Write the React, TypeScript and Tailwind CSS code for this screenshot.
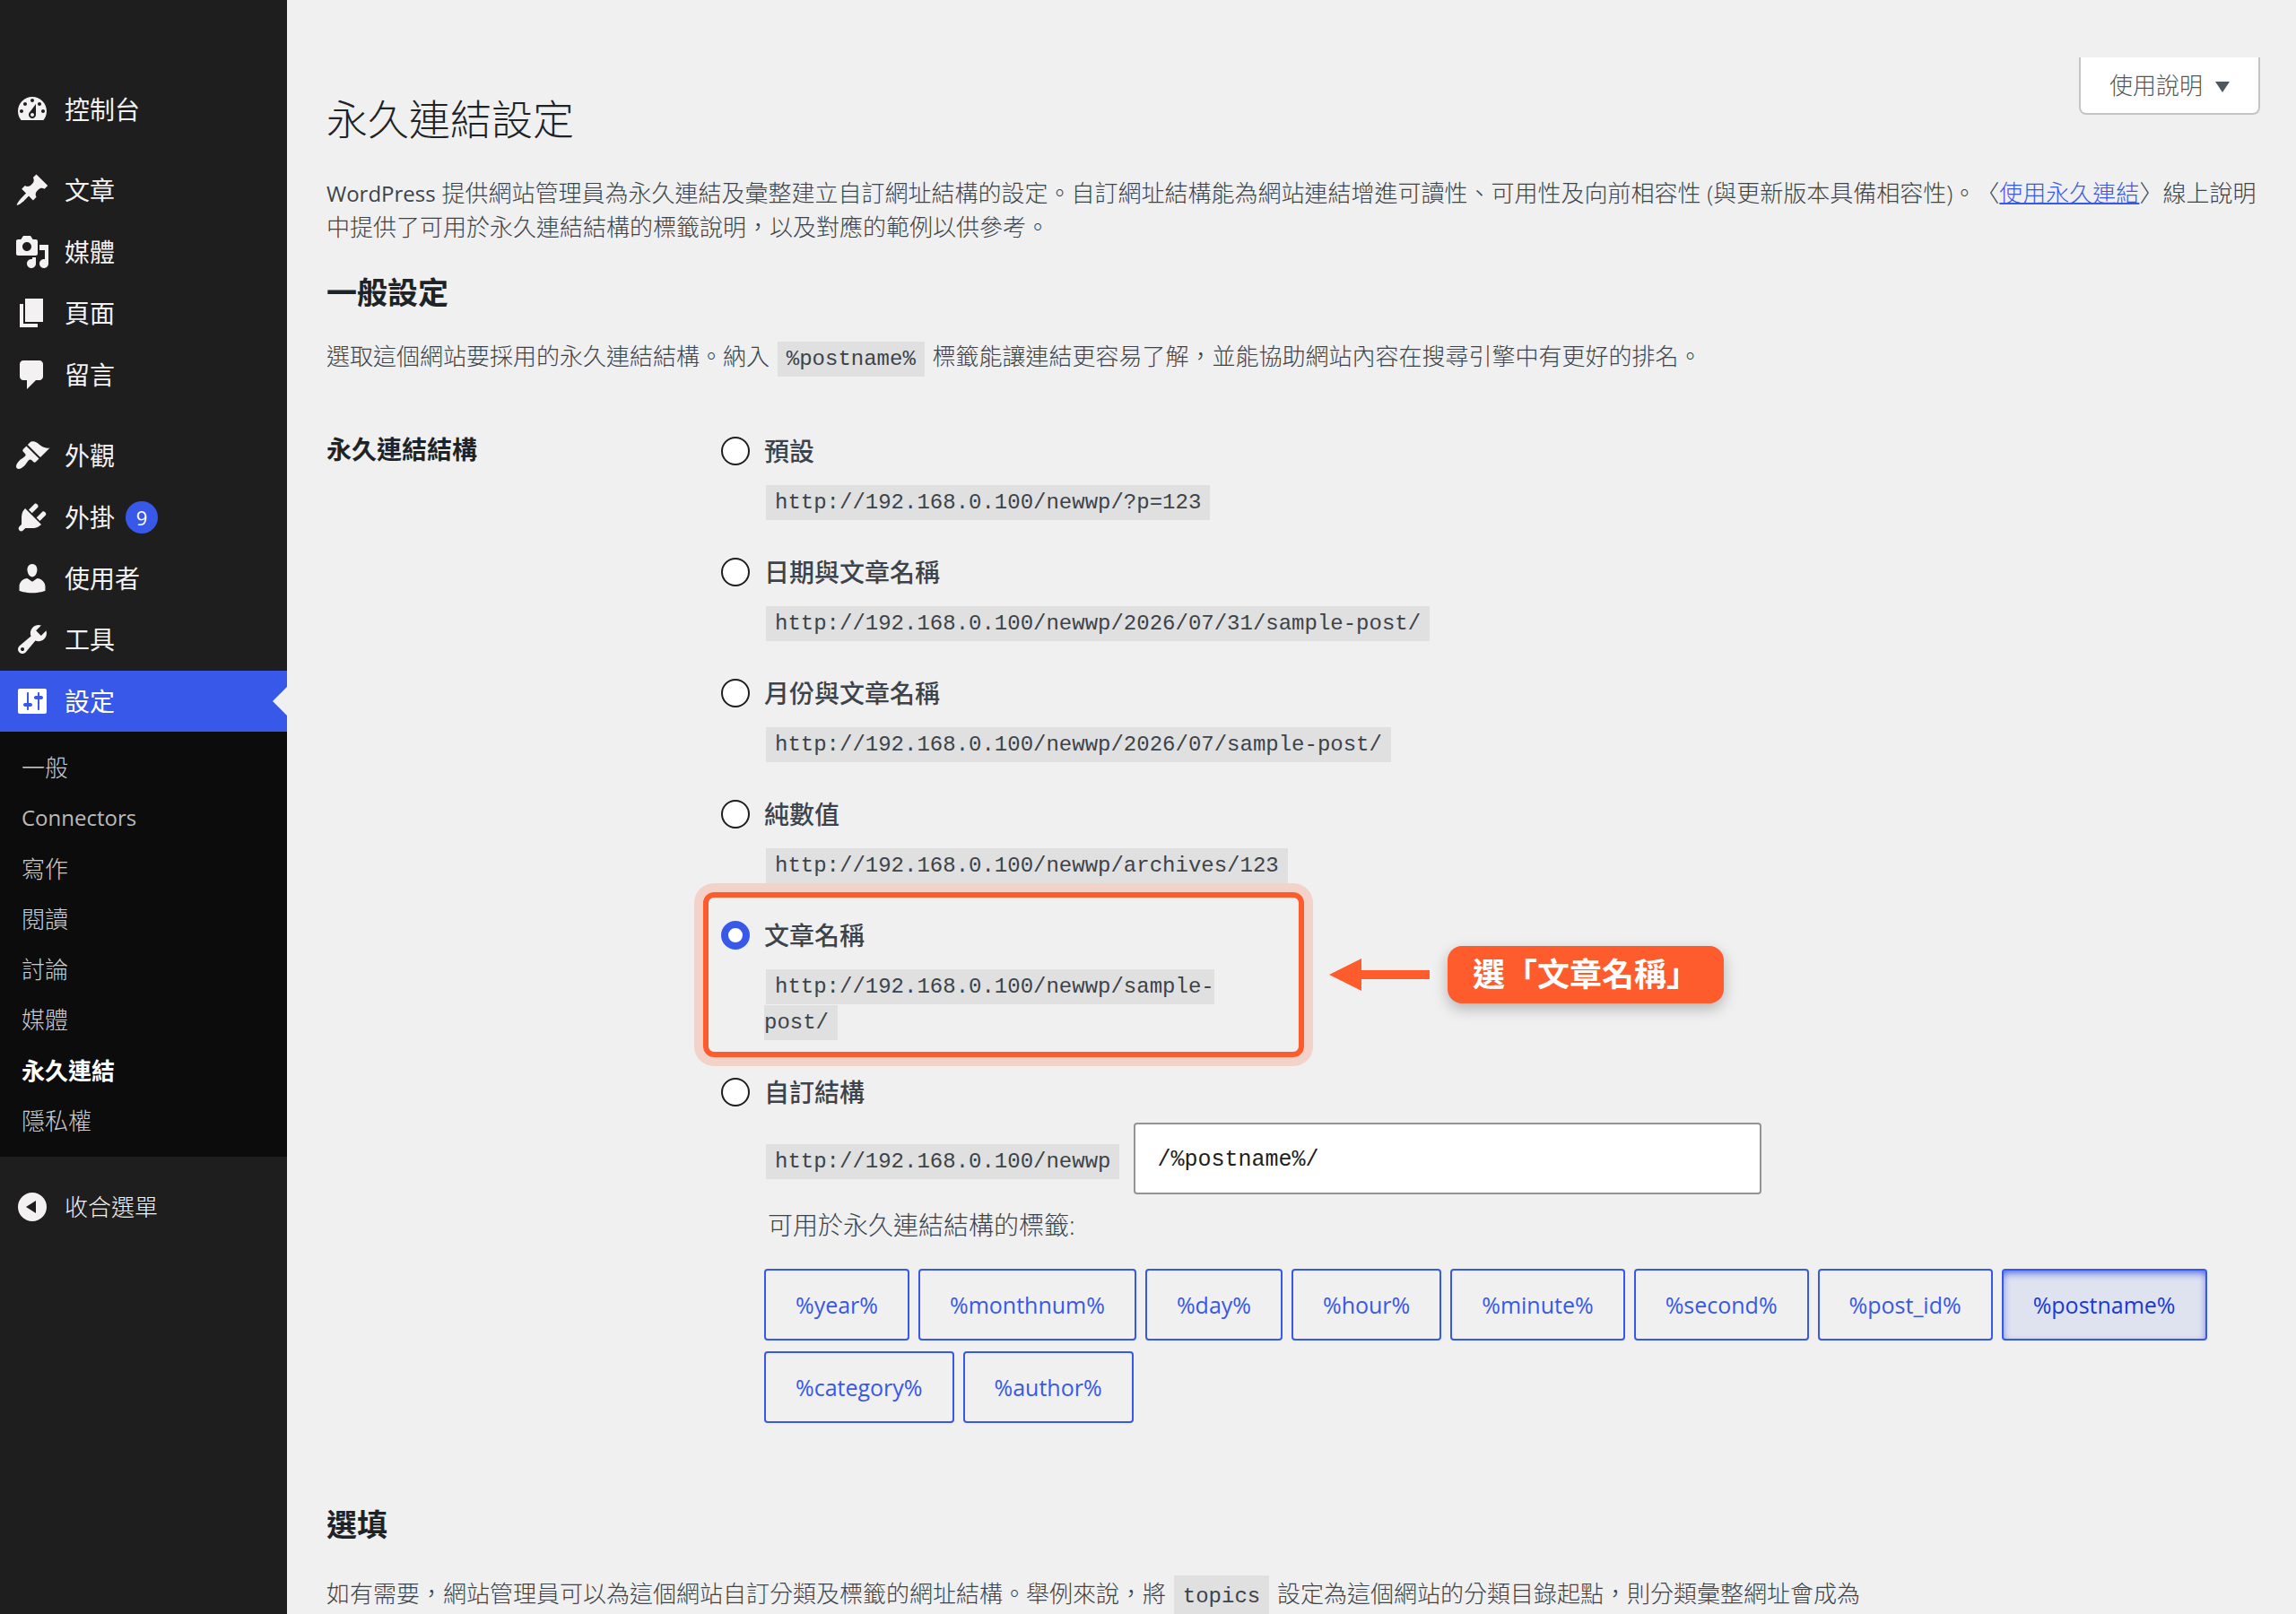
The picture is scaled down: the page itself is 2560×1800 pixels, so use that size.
import { useState } from "react";
import type { ReactNode } from "react";

type IconProps = { d: string };

function Icon({ d }: IconProps) {
  return (
    <svg viewBox="0 0 20 20" className="size-10 shrink-0" fill="currentColor" aria-hidden="true">
      <path fillRule="evenodd" d={d} />
    </svg>
  );
}

const ICONS = {
  dashboard:
    "M3.76 16h12.48c1.1-1.37 1.76-3.11 1.76-5 0-4.42-3.58-8-8-8s-8 3.58-8 8c0 1.89.66 3.63 1.76 5zM10 4c.55 0 1 .45 1 1s-.45 1-1 1-1-.45-1-1 .45-1 1-1zM6 6c.55 0 1 .45 1 1s-.45 1-1 1-1-.45-1-1 .45-1 1-1zm8 0c.55 0 1 .45 1 1s-.45 1-1 1-1-.45-1-1 .45-1 1-1zm-5.37 5.55L12 7v6c0 1.1-.9 2-2 2s-2-.9-2-2c0-.57.24-1.08.63-1.45zM4 10c.55 0 1 .45 1 1s-.45 1-1 1-1-.45-1-1 .45-1 1-1zm12 0c.55 0 1 .45 1 1s-.45 1-1 1-1-.45-1-1 .45-1 1-1zm-5 3c0-.55-.45-1-1-1s-1 .45-1 1 .45 1 1 1 1-.45 1-1z",
  posts:
    "M10.44 3.02l1.82-1.82 6.36 6.35-1.83 1.82c-1.05-.68-2.48-.57-3.41.36l-.75.75c-.92.93-1.04 2.35-.35 3.41l-1.83 1.82-2.41-2.41-2.8 2.79c-.42.42-3.38 2.71-3.8 2.29s1.86-3.39 2.28-3.81l2.79-2.79L4.1 9.36l1.83-1.82c1.05.69 2.48.57 3.4-.36l.75-.75c.93-.92 1.05-2.35.36-3.41z",
  media:
    "M13 11V4c0-.55-.45-1-1-1h-1.67L9 1H5L3.67 3H2c-.55 0-1 .45-1 1v7c0 .55.45 1 1 1h10c.55 0 1-.45 1-1zM7 4.5c1.38 0 2.5 1.12 2.5 2.5S8.38 9.5 7 9.5 4.5 8.38 4.5 7 5.62 4.5 7 4.5zM14 6h5v10.5c0 1.38-1.12 2.5-2.5 2.5S14 17.88 14 16.5s1.12-2.5 2.5-2.5c.17 0 .34.02.5.05V9h-3V6zm-4 8.05V13h2v3.5c0 1.38-1.12 2.5-2.5 2.5S7 17.88 7 16.5 8.12 14 9.5 14c.17 0 .34.02.5.05z",
  pages: "M6 15V2h10v13H6zm-1 1h8v2H3V5h2v11z",
  comments:
    "M5 2h9c1.1 0 2 .9 2 2v7c0 1.1-.9 2-2 2h-2l-5 5v-5H5c-1.1 0-2-.9-2-2V4c0-1.1.9-2 2-2z",
  appearance:
    "M14.48 11.06L7.41 3.99l1.5-1.5c.5-.56 2.3-.47 3.51.32 1.21.8 1.43 1.28 2.91 2.1 1.18.64 2.45 1.26 4.45.85zm-.71.71L6.7 4.7 4.93 6.47c-.39.39-.39 1.02 0 1.41l1.06 1.06c.39.39.39 1.03 0 1.42-.6.6-1.43 1.11-2.21 1.69-.35.26-.7.53-1.01.84C1.43 14.23.4 16.08 1.4 17.07c.99 1 2.84-.03 4.18-1.36.31-.31.58-.66.85-1.02.57-.78 1.08-1.61 1.69-2.21.39-.39 1.02-.39 1.41 0l1.06 1.06c.39.39 1.02.39 1.41 0z",
  plugins:
    "M13.11 4.36L9.87 7.6 8 5.73l3.24-3.24c.35-.34 1.05-.2 1.56.32.52.51.66 1.21.31 1.55zm-8 1.77l.91-1.12 9.01 9.01-1.19.84c-.71.71-2.63 1.16-3.82 1.16H6.14L4.9 17.26c-.59.59-1.54.59-2.12 0-.59-.58-.59-1.53 0-2.12l1.24-1.24v-3.88c0-1.13.4-3.19 1.09-3.89zm7.26 3.97l3.24-3.24c.34-.35 1.04-.21 1.55.31.52.51.66 1.21.31 1.55l-3.24 3.25z",
  users:
    "M10 9.25c-2.27 0-2.73-3.44-2.73-3.44C7 4.02 7.82 2 9.97 2c2.16 0 2.98 2.02 2.71 3.81 0 0-.41 3.44-2.68 3.44zm0 2.57L12.72 10c2.39 0 4.52 2.33 4.52 4.53v2.49s-3.65 1.13-7.24 1.13c-3.65 0-7.24-1.13-7.24-1.13v-2.49c0-2.25 1.94-4.48 4.47-4.48z",
  tools:
    "M16.68 9.77c-1.34 1.34-3.3 1.67-4.95.99l-5.41 6.52c-.99.99-2.59.99-3.58 0s-.99-2.59 0-3.57l6.52-5.42c-.68-1.65-.35-3.61.99-4.95 1.28-1.28 3.12-1.62 4.72-1.06l-2.89 2.89 2.82 2.82 2.86-2.87c.53 1.58.18 3.39-1.08 4.65zM3.81 16.21c.4.39 1.04.39 1.43 0 .4-.4.4-1.04 0-1.43-.39-.4-1.03-.4-1.43 0-.39.39-.39 1.03 0 1.43z",
  settings:
    "M18 16V4c0-.55-.45-1-1-1H3c-.55 0-1 .45-1 1v12c0 .55.45 1 1 1h14c.55 0 1-.45 1-1zM8 11h1c.55 0 1 .45 1 1s-.45 1-1 1H8v1.5c0 .28-.22.5-.5.5s-.5-.22-.5-.5V13H6c-.55 0-1-.45-1-1s.45-1 1-1h1V5.5c0-.28.22-.5.5-.5s.5.22.5.5V11zm5-2h-1c-.55 0-1-.45-1-1s.45-1 1-1h1V5.5c0-.28.22-.5.5-.5s.5.22.5.5V7h1c.55 0 1 .45 1 1s-.45 1-1 1h-1v5.5c0 .28-.22.5-.5.5s-.5-.22-.5-.5V9z",
  collapse: "M10 2a8 8 0 1 0 0 16 8 8 0 0 0 0-16zM12 6.5v7L6.5 10z",
};

type MenuItemProps = { icon: string; label: string; badge?: string; active?: boolean };

function MenuItem({ icon, label, badge, active }: MenuItemProps) {
  return (
    <li className="grid min-h-[68px]">
      <a
        href="#"
        className={
          active
            ? "relative flex items-center bg-[#3858e9] pl-4 text-[28px] leading-10 text-white"
            : "flex items-center pl-4 text-[28px] leading-10 text-[#f3f1f1]"
        }
      >
        <Icon d={icon} />
        <span className="ml-4">{label}</span>
        {badge && (
          <span className="ml-3 flex size-9 items-center justify-center rounded-full bg-[#3858e9] text-[22px] text-white">
            {badge}
          </span>
        )}
        {active && (
          <span className="absolute top-1/2 right-0 -translate-y-1/2 border-y-16 border-r-16 border-y-transparent border-r-[#f0f0f0]" />
        )}
      </a>
    </li>
  );
}

const SUBMENU = ["一般", "Connectors", "寫作", "閱讀", "討論", "媒體", "永久連結", "隱私權"];

function submenuClass(label: string) {
  if (label === "永久連結") return "flex items-center pl-6 text-[26px] font-bold text-white";
  if (label === "Connectors") return "flex items-center pl-6 text-[24px] font-normal text-[#bbbbbb]";
  return "flex items-center pl-6 text-[26px] font-light text-[#cccccc]";
}

function Sidebar() {
  return (
    <nav className="w-80 shrink-0 bg-[#1e1e1e] pt-22" aria-label="主選單">
      <ul>
        <MenuItem icon={ICONS.dashboard} label="控制台" />
      </ul>
      <ul className="mt-[22px] grid h-[274px] auto-rows-fr">
        <MenuItem icon={ICONS.posts} label="文章" />
        <MenuItem icon={ICONS.media} label="媒體" />
        <MenuItem icon={ICONS.pages} label="頁面" />
        <MenuItem icon={ICONS.comments} label="留言" />
      </ul>
      <ul className="mt-[22px] grid h-[342px] auto-rows-fr">
        <MenuItem icon={ICONS.appearance} label="外觀" />
        <MenuItem icon={ICONS.plugins} label="外掛" badge="9" />
        <MenuItem icon={ICONS.users} label="使用者" />
        <MenuItem icon={ICONS.tools} label="工具" />
        <MenuItem icon={ICONS.settings} label="設定" active />
      </ul>
      <ul className="grid h-[474px] auto-rows-fr bg-[#0c0c0c] py-3">
        {SUBMENU.map((label) => (
          <li key={label} className="grid">
            <a href="#" className={submenuClass(label)}>
              {label}
            </a>
          </li>
        ))}
      </ul>
      <button type="button" className="mt-[22px] flex h-[68px] w-full items-center pl-4 text-[26px] font-light text-[#f3f1f1]">
        <Icon d={ICONS.collapse} />
        <span className="ml-4">收合選單</span>
      </button>
    </nav>
  );
}

function Code({ children, tall }: { children: ReactNode; tall?: boolean }) {
  return (
    <code
      className={
        tall
          ? "mx-0.5 bg-[#e0e0e0] px-2.5 py-2.5 font-['Liberation_Mono',monospace] text-[24px] leading-none font-normal"
          : "mx-0.5 bg-[#e0e0e0] px-2.5 py-1.5 font-['Liberation_Mono',monospace] text-[24px] leading-none font-normal"
      }
    >
      {children}
    </code>
  );
}

type OptionProps = {
  id: string;
  label: string;
  selected: string;
  onSelect: (id: string) => void;
  children: ReactNode;
};

function Option({ id, label, selected, onSelect, children }: OptionProps) {
  return (
    <div>
      <div className="flex h-8 items-center gap-4">
        <input
          type="radio"
          name="permalink"
          id={id}
          checked={selected === id}
          onChange={() => onSelect(id)}
          className="size-8 shrink-0 appearance-none rounded-full border-2 border-[#1e1e1e] bg-white checked:border-8 checked:border-[#3858e9]"
        />
        <label htmlFor={id} className="text-[28px] leading-8 font-medium">
          {label}
        </label>
      </div>
      <div className="mt-[18px] pl-12 leading-10">{children}</div>
    </div>
  );
}

const TAGS = ["year", "monthnum", "day", "hour", "minute", "second", "post_id", "postname", "category", "author"];

export default function App() {
  const [selected, setSelected] = useState("name");
  const [structure, setStructure] = useState("/%postname%/");
  const option = { selected, onSelect: setSelected };

  return (
    <div
      lang="zh-Hant"
      className="flex h-screen min-h-[900px] overflow-hidden bg-[#f0f0f0] font-['Open_Sans','Noto_Sans_CJK_TC',sans-serif] text-[26px] leading-[38px] text-[#3c434a] [text-spacing-trim:space-all]"
    >
      <Sidebar />
      <main className="min-w-0 flex-1 pt-16 pr-10 pl-11">
        <header className="flex items-start justify-between">
          <h1 className="mt-10 text-[46px] leading-14 font-light text-[#1d2327]">永久連結設定</h1>
          <button
            type="button"
            className="flex h-16 items-center gap-3.5 rounded-b-lg border-2 border-t-0 border-[#c3c4c7] bg-white px-8 font-light text-[#50575e]"
          >
            使用說明
            <svg viewBox="0 0 16 12" className="mt-1 h-3 w-4" fill="currentColor" aria-hidden="true">
              <path d="M0 0h16L8 12z" />
            </svg>
          </button>
        </header>

        <p className="mt-9 font-light">
          <span className="text-[24px] leading-none font-normal">WordPress</span>{" "}
          提供網站管理員為永久連結及彙整建立自訂網址結構的設定。自訂網址結構能為網站連結增進可讀性、可用性及向前相容性 (與更新版本具備相容性)。〈
          <a href="#" className="text-[#3858e9] underline decoration-2">使用永久連結</a>
          〉線上說明中提供了可用於永久連結結構的標籤說明，以及對應的範例以供參考。
        </p>

        <h2 className="mt-[34px] text-[34px] leading-10 font-bold text-[#1d2327]">一般設定</h2>
        <p className="mt-[31px] leading-10 font-light">
          選取這個網站要採用的永久連結結構。納入 <Code>%postname%</Code> 標籤能讓連結更容易了解，並能協助網站內容在搜尋引擎中有更好的排名。
        </p>

        <div className="mt-[70px] flex items-start" role="radiogroup" aria-labelledby="structure-heading">
          <h3 id="structure-heading" className="w-[440px] shrink-0 text-[28px] leading-7 font-bold text-[#1d2327]">
            永久連結結構
          </h3>
          <div className="flex min-w-0 flex-1 flex-col gap-[45px]">
            <Option id="plain" label="預設" {...option}>
              <Code>http://192.168.0.100/newwp/?p=123</Code>
            </Option>
            <Option id="day" label="日期與文章名稱" {...option}>
              <Code>http://192.168.0.100/newwp/2026/07/31/sample-post/</Code>
            </Option>
            <Option id="month" label="月份與文章名稱" {...option}>
              <Code>http://192.168.0.100/newwp/2026/07/sample-post/</Code>
            </Option>
            <Option id="numeric" label="純數值" {...option}>
              <Code>http://192.168.0.100/newwp/archives/123</Code>
            </Option>
            <div className="relative w-[630px]">
              <Option id="name" label="文章名稱" {...option}>
                <div className="max-w-[520px]">
                  <Code>http://192.168.0.100/newwp/sample-post/</Code>
                </div>
              </Option>
              <div className="pointer-events-none absolute -top-8 -right-5 -bottom-5.5 -left-5 rounded-xl border-6 border-[#ff5c2e] shadow-[0_0_0_10px_rgba(255,92,46,0.2)]" />
              <div className="absolute top-7 left-full ml-12 flex items-center gap-5">
                <svg viewBox="0 0 112 36" className="h-9 w-28 shrink-0" fill="#ff5c2e" aria-hidden="true">
                  <path d="M0 18L36 0v13h76v10H36v13z" />
                </svg>
                <div className="flex h-16 items-center rounded-2xl bg-[#ff5c2e] px-7 text-[36px] font-bold whitespace-nowrap text-white shadow-[0_6px_16px_rgba(0,0,0,0.25)]">
                  選「文章名稱」
                </div>
              </div>
            </div>
            <Option id="custom" label="自訂結構" {...option}>
              <div className="flex items-center gap-3.5">
                <label htmlFor="structure">
                  <Code>http://192.168.0.100/newwp</Code>
                </label>
                <input
                  type="text"
                  id="structure"
                  value={structure}
                  onChange={(event) => setStructure(event.target.value)}
                  className="h-20 w-[700px] rounded border-2 border-[#949494] bg-white px-6 pt-0.5 font-['Liberation_Mono',monospace] text-[25px] text-[#1e1e1e]"
                />
              </div>
              <p className="mt-3.5 ml-1 text-[28px] font-light">可用於永久連結結構的標籤:</p>
              <ul className="mt-[29px] flex flex-wrap gap-x-2.5 gap-y-3">
                {TAGS.map((tag) => (
                  <li key={tag}>
                    <button
                      type="button"
                      className={
                        tag === "postname"
                          ? "h-20 rounded border-2 border-[#3858e9] bg-[#dfe2ef] px-[33px] text-[25px] font-medium text-[#183ad6] shadow-[inset_0_4px_10px_-2px_#3858e9]"
                          : "h-20 rounded border-2 border-[#3858e9] px-[33px] text-[25px] font-medium text-[#3858e9]"
                      }
                    >
                      {`%${tag}%`}
                    </button>
                  </li>
                ))}
              </ul>
            </Option>
          </div>
        </div>

        <h2 className="mt-[93px] text-[34px] leading-10 font-bold text-[#1d2327]">選填</h2>
        <p className="mt-[37px] leading-10 font-light">
          如有需要，網站管理員可以為這個網站自訂分類及標籤的網址結構。舉例來說，將 <Code tall>topics</Code> 設定為這個網站的分類目錄起點，則分類彙整網址會成為
        </p>
      </main>
    </div>
  );
}
